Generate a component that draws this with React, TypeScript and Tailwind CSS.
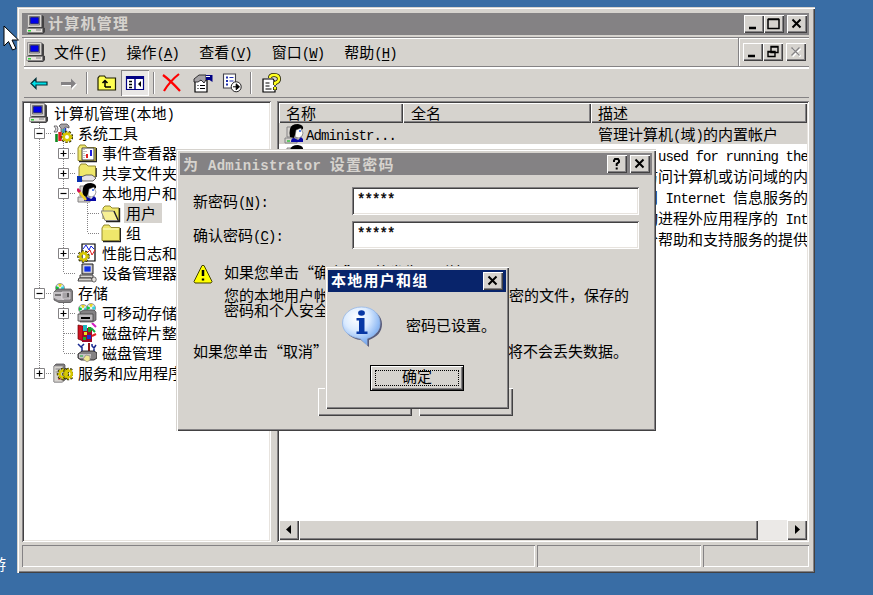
import type { ReactNode } from 'react';

const raised = 'bg-[#d6d3ce] shadow-[inset_1px_1px_0_#fff,inset_-1px_-1px_0_#424142,inset_-2px_-2px_0_#848284]';
const frame = 'bg-[#d6d3ce] shadow-[inset_1px_1px_0_#d6d3ce,inset_2px_2px_0_#fff,inset_-1px_-1px_0_#424142,inset_-2px_-2px_0_#848284]';
const sunken = 'shadow-[inset_1px_1px_0_#848284,inset_-1px_-1px_0_#fff,inset_2px_2px_0_#424142,inset_-2px_-2px_0_#e7e3de]';
const thinSunken = 'shadow-[inset_1px_1px_0_#848284,inset_-1px_-1px_0_#fff]';

// Latin runs take exactly half the advance of a Chinese glyph
const latin = "font-['Liberation_Mono',monospace] text-[14px] leading-none tracking-[-0.9px]";
const latinBold = "font-['Liberation_Mono',monospace] text-[14px] leading-none tracking-[0.3px]";

const Txt = ({ children, bold = false }: { children: string; bold?: boolean }) => (
    <span className={`whitespace-pre ${bold ? 'font-bold tracking-[1.25px]' : ''}`}>
        {(children.match(/[\x00-\x7f]+|[^\x00-\x7f]+/g) || []).map((run, i) =>
            run.charCodeAt(0) < 128 ? (
                <span key={i} className={bold ? latinBold : latin}>{run}</span>
            ) : (
                <span key={i}>{run}</span>
            )
        )}
    </span>
);

const Key = ({ label, k, tail = '' }: { label: string; k: string; tail?: string }) => (
    <span className="whitespace-pre">
        {label}
        <span className={latin}>
            (<span className="underline underline-offset-2">{k}</span>){tail}
        </span>
    </span>
);

const Svg = ({ children, size = 20 }: { children: ReactNode; size?: number }) => (
    <svg width={size} height={size} viewBox="0 0 20 20" className="shrink-0">{children}</svg>
);

const Computer = () => (
    <Svg>
        <path d="M3 1h13l2 1.5v11L16 15H3z" fill="#424142" />
        <path d="M1.5 .5h14v13h-14z" fill="#d6d3ce" stroke="#848284" strokeWidth=".8" />
        <path d="M3.5 2.5h10V11h-10z" fill="#b5b2b5" stroke="#636163" strokeWidth=".8" />
        <path d="M4.5 3.5h8v6h-8z" fill="#0000e8" stroke="#000060" strokeWidth=".6" />
        <path d="M1 15l2-2h13l3 1v4l-2 2H2z" fill="#424142" />
        <path d="M.5 14.5h16v4H.5z" fill="#e7e3de" stroke="#848284" strokeWidth=".7" />
        <path d="M2 16.8h3" stroke="#10d020" strokeWidth="1.3" />
        <path d="M10 16h5" stroke="#848284" />
    </Svg>
);

const FolderShape = () => (
    <>
        <path d="M2 18.5h17.5V5" fill="none" stroke="#212021" strokeWidth="1.4" />
        <path d="M1 5l2-3h5l2 2.5h8.5v13H1z" fill="#efe76b" stroke="#948a31" />
        <path d="M2 6h15.5" stroke="#ffffd0" />
    </>
);

const Folder = () => <Svg><FolderShape /></Svg>;

const OpenFolder = () => (
    <Svg>
        <path d="M2 16V5l2-2h5l2 2h7v12" fill="#efe76b" stroke="#948a31" />
        <path d="M18.5 5v13.5H5" fill="none" stroke="#212021" strokeWidth="1.4" />
        <path d="M0 8h12.5l4.5 9.5H4z" fill="#f7ef94" stroke="#848284" />
        <path d="M13 8l4.5 10" stroke="#212021" strokeWidth="1.2" />
    </Svg>
);

const Gear = ({ x, y }: { x: number; y: number }) => (
    <g transform={`translate(${x} ${y})`}>
        <circle r="4.7" fill="none" stroke="#212000" strokeWidth="3" strokeDasharray="2 1.3" />
        <circle r="3.2" fill="none" stroke="#d8c800" strokeWidth="2.4" />
        <circle r="4.6" fill="none" stroke="#d8c800" strokeWidth="1.6" strokeDasharray="1.6 1.7" />
    </g>
);

const Tools = () => (
    <Svg>
        <path d="M6 3l2-2h6l2 2v2l-3-1-2 1v4H8V5z" fill="#a5a2a5" stroke="#424142" strokeWidth=".7" />
        <path d="M1 3h3l1 3-1 3H1l2-3z" fill="#e7e3e7" stroke="#424142" strokeWidth=".7" />
        <path d="M3.5 11v8" stroke="#108a20" strokeWidth="2.6" />
        <path d="M7 9v9" stroke="#e02020" strokeWidth="3.4" />
        <path d="M10.5 6v7" stroke="#20a8b0" strokeWidth="2" />
        <path d="M12.5 5v5" stroke="#2038c0" strokeWidth="1.5" />
        <Gear x={14} y={14} />
    </Svg>
);

const EventLog = () => (
    <Svg>
        <FolderShape />
        <path d="M5 5h12v12H5z" fill="#fff" stroke="#424142" />
        <path d="M7 6v10M9 8v2M9 12v2" stroke="#848284" strokeDasharray="1 1" />
        <path d="M10 11v4" stroke="#e02020" strokeWidth="2" />
        <path d="M14 7v6" stroke="#2020e0" strokeWidth="2" />
    </Svg>
);

const Shared = () => (
    <Svg>
        <path d="M2 4l2-3h5l2 2h7.5v11H2z" fill="#efe76b" stroke="#948a31" />
        <path d="M19.3 5v9" stroke="#212021" />
        <path d="M4 14l5-2h6l4 3-3 3H5z" fill="#e7e3e7" stroke="#424142" strokeWidth=".8" />
        <path d="M0 13h5v6H0z" fill="#0830b0" />
    </Svg>
);

const User = ({ pencil = false }: { pencil?: boolean }) => (
    <Svg>
        <path d="M3 3h6v10H3zM1 14h12v5H1z" fill="#d6d3ce" stroke="#848284" />
        <path d="M6 5q1-5 8-5 6 1 5 5l-2 1-5 2-2 6-4-1q-1-4 0-8" fill="#000" />
        <path d="M12 6l5-2 1 3 1 2-1 3-3 2-4-1z" fill="#fff" stroke="#424142" strokeWidth=".5" />
        <path d="M7 18q0-4 3-4l4 2 3-3 2 2v3z" fill="#0808a5" />
        <path d="M15 7h2" stroke="#2058e0" strokeWidth="1.4" />
        {pencil && <path d="M1 7l8 10" stroke="#f0d020" strokeWidth="2.6" />}
        {pencil && <path d="M0 6l3 3" stroke="#d01060" strokeWidth="3" />}
        {!pencil && <path d="M3 17h3" stroke="#10c020" strokeWidth="1.2" />}
    </Svg>
);

const Perf = () => (
    <Svg>
        <path d="M5 1h13v17H5z" fill="#fff" stroke="#000" strokeWidth="1.2" />
        <path d="M6 6l3-4 3 5 2-4 3 3" fill="none" stroke="#1020e0" />
        <path d="M10 10l3-3 2 5 3-5" fill="none" stroke="#e02020" />
        <Gear x={6.5} y={13.5} />
    </Svg>
);

const Devices = () => (
    <Svg>
        <path d="M5 1h11v10H5z" fill="#bdbabd" stroke="#212021" />
        <path d="M7 3h7v6H7z" fill="#1030e0" stroke="#fff" strokeWidth=".6" />
        <path d="M3 12h13v3H3z" fill="#d6d3ce" stroke="#424142" />
        <path d="M2 15h12l2 3H1z" fill="#d6d3ce" stroke="#424142" />
        <ellipse cx="17" cy="16.5" rx="2.2" ry="2.6" fill="#e7e3de" stroke="#424142" strokeWidth=".8" />
    </Svg>
);

const Disc = ({ x, y }: { x: number; y: number }) => (
    <g transform={`translate(${x} ${y})`}>
        <circle r="4.5" fill="#d6e3e7" stroke="#848284" strokeWidth=".8" />
        <path d="M0 0L-4 -2V2z" fill="#10c840" />
        <path d="M0 0L-2 -4L2 -4z" fill="#e8d820" />
        <path d="M0 0L4 -2V2z" fill="#30d8e0" />
        <circle r="1" fill="#fff" />
    </g>
);

const Storage = () => (
    <Svg>
        <Disc x={7} y={5} />
        <path d="M1 9l3-3h14l1.5 2v10l-2 1.5H6L1 17z" fill="#848284" stroke="#424142" strokeWidth=".7" />
        <path d="M1 9h10v8H5l-4-2z" fill="#c6c3c6" />
        <path d="M9 9h8v7H9z" fill="#a5a2a5" stroke="#e7e3e7" strokeWidth=".7" />
        <path d="M2 12h6M15 10v4" stroke="#212021" strokeWidth="1.2" />
    </Svg>
);

const Removable = () => (
    <Svg>
        <Disc x={6} y={6} />
        <Disc x={14} y={5} />
        <path d="M3 9l4-2h10l2 2v8l-3 2H3z" fill="#848284" stroke="#424142" strokeWidth=".7" />
        <path d="M1 11h15v7H1z" fill="#bdbabd" stroke="#424142" strokeWidth=".8" />
        <path d="M4 14h9v2H4z" fill="#000" />
    </Svg>
);

const Defrag = () => (
    <Svg>
        <path d="M1 2l5 1v15l-5-2z" fill="#d01020" stroke="#600" strokeWidth=".7" />
        <path d="M6 5h9v14H5z" fill="#a00828" />
        <path d="M6 2h4v6H6z" fill="#20b8c0" />
        <path d="M11 4h3v5h-3z" fill="#18a020" />
        <path d="M7 9h3v3H7z" fill="#f0e020" />
        <path d="M10 12h4v4h-4z" fill="#2030d0" />
        <path d="M6 14h3v3H6z" fill="#18b030" />
        <path d="M15 0l4 4" stroke="#d020c0" strokeWidth="2" />
        <path d="M14 5l4 4" stroke="#10b040" strokeWidth="2" />
        <path d="M15 13l4-2" stroke="#e02020" strokeWidth="2" />
    </Svg>
);

const DiskMgmt = () => (
    <Svg>
        <path d="M1 1l3 3 3-3M5 4v5M15 1v2l2 2 2-3M17 4v5" fill="none" stroke="#182890" strokeWidth="1.5" />
        <path d="M12 0v8" stroke="#901818" strokeWidth="2" />
        <path d="M1 11l4-3h12l3 2v5l-3 2H4l-3-2z" fill="#848284" stroke="#212021" strokeWidth=".9" />
        <path d="M2 11h12v4H2z" fill="#c6c3c6" />
        <path d="M9 12l4 1v4l-3 2-4-3z" fill="#f0e890" stroke="#848284" strokeWidth=".7" />
        <path d="M3 13h3" stroke="#10b030" />
    </Svg>
);

const Services = () => (
    <Svg>
        <path d="M1 3l2-2h8l1 1v15l-3 2H1z" fill="#848284" stroke="#424142" strokeWidth=".7" />
        <path d="M1 3h9v16H1z" fill="#d6d3ce" stroke="#848284" strokeWidth=".6" />
        <path d="M2.5 6h6M2.5 9h6" stroke="#848284" />
        <path d="M5 16h3" stroke="#e02020" />
        <Gear x={10} y={11} />
        <Gear x={15.5} y={11} />
    </Svg>
);

// "-" / "+" / "p" (last one) draw an expander box, "t" a branch, "l" the last branch, "v" a plain line
const Guide = ({ kind }: { kind: string }) => (
    <svg width="24" height="20" viewBox="0 0 24 20" className="shrink-0">
        <path d={kind === 'l' || kind === 'p' ? 'M12.5 0V10' : 'M12.5 0V20'} stroke="#848284" strokeDasharray="1 1" />
        {kind !== 'v' && <path d="M13 10.5H25" stroke="#848284" strokeDasharray="1 1" />}
        {'-+p'.includes(kind) && (
            <>
                <path d="M7.5 5.5h10v10h-10z" fill="#fff" stroke="#848284" />
                <path d={kind === '-' ? 'M9.5 10.5h6' : 'M9.5 10.5h6M12.5 7.5v6'} stroke="#000" strokeWidth="1.2" />
            </>
        )}
    </svg>
);

const tree = [
    { guides: '', icon: <Computer />, label: '计算机管理(本地)' },
    { guides: '-', icon: <Tools />, label: '系统工具' },
    { guides: 'v+', icon: <EventLog />, label: '事件查看器' },
    { guides: 'v+', icon: <Shared />, label: '共享文件夹' },
    { guides: 'v-', icon: <User pencil />, label: '本地用户和组' },
    { guides: 'vvt', icon: <OpenFolder />, label: '用户', selected: true },
    { guides: 'vvl', icon: <Folder />, label: '组' },
    { guides: 'v+', icon: <Perf />, label: '性能日志和警报' },
    { guides: 'vl', icon: <Devices />, label: '设备管理器' },
    { guides: '-', icon: <Storage />, label: '存储' },
    { guides: 'v+', icon: <Removable />, label: '可移动存储' },
    { guides: 'vt', icon: <Defrag />, label: '磁盘碎片整理程序' },
    { guides: 'vl', icon: <DiskMgmt />, label: '磁盘管理' },
    { guides: 'p', icon: <Services />, label: '服务和应用程序' },
];

const users = [
    { name: 'Administr...', desc: '管理计算机(域)的内置帐户', selected: true },
    { name: 'ASPNET', desc: 'Account used for running the ASP.NET' },
    { name: 'Guest', desc: '供来宾访问计算机或访问域的内置帐户' },
    { name: 'IUSR', desc: '匿名访问 Internet 信息服务的内置帐户' },
    { name: 'IWAM', desc: '用于启动进程外应用程序的 Internet' },
    { name: 'SUPPORT', desc: '这是一个帮助和支持服务的提供商帐户' },
];

const menus = [
    ['文件', 'F'],
    ['操作', 'A'],
    ['查看', 'V'],
    ['窗口', 'W'],
    ['帮助', 'H'],
];

const glyphs = {
    min: <path d="M5 13h7" strokeWidth="2.5" />,
    max: <path d="M4 4.5h11v9H4zM4 4h11" strokeWidth="1.5" />,
    restore: <path d="M8 3.5h7v6H8zM8 4h7M5 8.5h7v5H5zM5 9h7" strokeWidth="1.4" fill="none" />,
    close: <path d="M5.5 4.5l8 8M13.5 4.5l-8 8" strokeWidth="2" />,
    help: <path d="M7 7V5.5L8 4h3l1 1.5V7L9.7 9v2M9.7 12.5v2" strokeWidth="2" />,
};

const CapButton = ({ glyph, disabled = false }: { glyph: keyof typeof glyphs; disabled?: boolean }) => (
    <button className={`h-[18px] w-5 shrink-0 ${raised}`}>
        <svg width="20" height="18" viewBox="0 0 20 18" fill="none" stroke={disabled ? '#848284' : '#000'}>
            {disabled && <path d="M6.5 5.5l8 8M14.5 5.5l-8 8" stroke="#fff" strokeWidth="2" />}
            {disabled ? <path d="M5.5 4.5l8 8M13.5 4.5l-8 8" strokeWidth="1.4" /> : glyphs[glyph]}
        </svg>
    </button>
);

const Sep = () => <div className="mx-1 h-[22px] w-0.5 border-l border-[#848284] bg-white" />;

const Tool = ({ children }: { children: ReactNode }) => (
    <div className="flex w-[29px] shrink-0 justify-center">{children}</div>
);

const Toolbar = () => (
    <div className="flex h-[29px] items-center border-b border-[#848284]">
        <Tool>
            <Svg><path d="M2 10.5l5-5V9h11v3H7v3.5z" fill="#00e0e8" stroke="#003038" strokeWidth="1.2" /></Svg>
        </Tool>
        <Tool>
            <Svg>
                <path d="M19 11.5l-5-5V10H4v3h10v4z" fill="#fff" />
                <path d="M18 10.5l-5-5V9H3v3h10v3.5z" fill="#848284" />
            </Svg>
        </Tool>
        <Sep />
        <Tool>
            <Svg>
                <path d="M1 17V5l1.5-2h5L9 5h9.5v12z" fill="#ffff52" stroke="#212000" strokeWidth="1.2" />
                <path d="M8 14h6M8 14V8.5M5.5 10L8 7.5l2.5 2.5" fill="none" stroke="#000" strokeWidth="1.5" />
            </Svg>
        </Tool>
        <div className="flex h-[26px] w-7 shrink-0 items-center justify-center bg-[#e9e7e5] shadow-[inset_1px_1px_0_#848284,inset_-1px_-1px_0_#fff]">
            <Svg>
                <path d="M1.5 3.5h17v13h-17z" fill="#fff" stroke="#000084" strokeWidth="1.2" />
                <path d="M1 3h18v3H1z" fill="#000084" />
                <path d="M10 5v12" stroke="#000084" strokeWidth="1.5" />
                <path d="M4 8.5h3M4 11.5h3M4 14.5h3" stroke="#000" strokeWidth="1.3" />
                <path d="M16 8v6l-3-3z" fill="#000" />
            </Svg>
        </div>
        <Sep />
        <div className="-ml-[3px]">
            <Tool>
                <Svg><path d="M2 2q8 6 17 16M18 1Q9 8 3 18" fill="none" stroke="#f00" strokeWidth="2.2" /></Svg>
            </Tool>
        </div>
        <div className="ml-[3px]">
            <Tool>
                <Svg>
                    <path d="M2 7h12v12H2z" fill="#fff" stroke="#000" strokeWidth="1.2" />
                    <path d="M4.5 12.5h1M7 12.5h5M4.5 15.5h1M7 15.5h5" stroke="#000" strokeWidth="1.2" />
                    <path d="M1 6l5-4h7v5l-2 3-3-3-3 2H1z" fill="#a5a2a5" stroke="#212021" strokeWidth=".9" />
                    <path d="M13 2h6.5v7l-3-2H13z" fill="#000084" />
                    <path d="M13 3.5h4" stroke="#fff" />
                </Svg>
            </Tool>
        </div>
        <Tool>
            <Svg>
                <path d="M1.5 1h12v14h-12z" fill="#fff" stroke="#42414a" strokeWidth="1.1" />
                <path d="M4 4.5h2M4 8h2M4 11.5h2" stroke="#2030b0" strokeWidth="1.8" />
                <path d="M7.5 4.5h4M7.5 8h4" stroke="#2030b0" />
                <circle cx="14.2" cy="13.8" r="5" fill="#fff" stroke="#212021" />
                <path d="M11 13.8h4M14.2 10.8l3.3 3-3.3 3z" fill="#000" stroke="#000" strokeWidth="1" />
            </Svg>
        </Tool>
        <Sep />
        <Tool>
            <Svg>
                <path d="M2 6h10l2 3v10H2z" fill="#fff" stroke="#000" strokeWidth="1.2" />
                <path d="M4.5 10h4M4.5 13h4M4.5 16h6" stroke="#000" />
                <path d="M9 5q0-3 4-3 5 0 5 4 0 3-4 4v2M14 14v3" fill="none" stroke="#212000" strokeWidth="4" />
                <path d="M9 5q0-3 4-3 5 0 5 4 0 3-4 4v2M14 14v2.5" fill="none" stroke="#ffff20" strokeWidth="2.4" />
            </Svg>
        </Tool>
    </div>
);

const ConsoleWindow = () => (
    <div className={`absolute left-[17px] top-[7px] flex h-[566px] w-[798px] flex-col px-[5px] pb-1.5 pt-1.5 ${frame}`}>
        <div className="flex h-[22px] w-[787px] shrink-0 items-center bg-[#848284] pl-1 pr-0.5 text-[#d6d3ce]">
            <Computer />
            <div className="ml-0.5 grow pb-0.5"><Txt bold>计算机管理</Txt></div>
            <CapButton glyph="min" />
            <CapButton glyph="max" />
            <div className="w-[3px]" />
            <CapButton glyph="close" />
        </div>

        <div className="mt-0.5 flex h-[62px] w-[787px] shrink-0 flex-col border-t border-[#848284] pl-0.5">
            <div className="flex h-[29px] shrink-0 items-stretch border-b border-[#848284] shadow-[inset_1px_1px_0_#fff]">
                <div className="flex grow items-center gap-5 border-r border-[#848284] pl-0.5">
                    <div className="-mr-3"><Computer /></div>
                    {menus.map(([label, k]) => <Key key={k} label={label} k={k} />)}
                </div>
                <div className="flex w-[70px] shrink-0 items-center border-l border-white pl-[3px]">
                    <CapButton glyph="min" />
                    <CapButton glyph="restore" />
                    <div className="w-[3px]" />
                    <CapButton glyph="close" disabled />
                </div>
            </div>
            <div className="border-t-2 border-white"><Toolbar /></div>
        </div>

        <div className="mt-0.5 flex h-[441px] w-[787px] shrink-0 gap-1.5">
            <div className={`w-[249px] shrink-0 overflow-hidden bg-white px-0.5 pt-[2px] ${sunken}`}>
                <div className="w-[245px] overflow-hidden pl-[3px]">
                    {tree.map((node) => (
                        <div key={node.label} className="flex h-5 items-center">
                            {node.guides.split('').map((kind, i) => <Guide key={i} kind={kind} />)}
                            <div className="flex w-6 shrink-0 justify-center">{node.icon}</div>
                            <div className={`ml-px flex h-5 shrink-0 items-center px-0.5 ${node.selected ? 'bg-[#d6d3ce] pr-1.5' : ''}`}>
                                <Txt>{node.label}</Txt>
                            </div>
                        </div>
                    ))}
                </div>
            </div>

            <div className={`flex min-w-0 grow flex-col bg-white p-0.5 ${sunken}`}>
                <div className="flex h-5 shrink-0">
                    <div className={`flex w-[124px] shrink-0 items-center pl-[7px] ${raised}`}><Txt>名称</Txt></div>
                    <div className={`flex w-[188px] shrink-0 items-center pl-2 ${raised}`}><Txt>全名</Txt></div>
                    <div className={`flex grow items-center pl-[7px] ${raised}`}><Txt>描述</Txt></div>
                </div>
                <div className="grow overflow-hidden">
                    {users.map((u) => (
                        <div key={u.name} className={`flex h-[21px] items-center ${u.selected ? 'bg-[#d6d3ce]' : ''}`}>
                            <div className="ml-[5px]"><User /></div>
                            <div className="ml-0.5 w-[292px] shrink-0"><Txt>{u.name}</Txt></div>
                            <Txt>{u.desc}</Txt>
                        </div>
                    ))}
                </div>
                <div className="flex h-5 shrink-0 bg-[#ebe9e7]">
                    <div className={`flex w-5 items-center justify-center ${raised}`}>
                        <svg width="8" height="10"><path d="M6 0v9L1 4.5z" /></svg>
                    </div>
                    <div className={`w-[459px] ${raised}`} />
                    <div className="grow" />
                    <div className={`flex w-5 items-center justify-center ${raised}`}>
                        <svg width="8" height="10"><path d="M2 0v9l5-4.5z" /></svg>
                    </div>
                </div>
            </div>
        </div>

        <div className="mt-[3px] flex h-[22px] w-[787px] shrink-0 gap-0.5">
            <div className={`w-[513px] ${thinSunken}`} />
            <div className={`w-[164px] ${thinSunken}`} />
            <div className={`w-[106px] ${thinSunken}`} />
        </div>
    </div>
);

const PasswordField = ({ label, k }: { label: string; k: string }) => (
    <div className="flex h-[28px] items-center">
        <div className="w-[159px] shrink-0"><Key label={label} k={k} tail=":" /></div>
        <div className={`h-7 w-[287px] bg-white pl-[5px] pt-px [-webkit-text-stroke:0.4px_black] ${sunken}`}><Txt>*****</Txt></div>
    </div>
);

const PasswordDialog = () => (
    <div className={`absolute left-[176px] top-[149px] h-[282px] w-[480px] p-1 ${frame}`}>
        <div className="flex h-[22px] items-center bg-[#848284] pl-[3px] pr-0.5 text-[#d6d3ce]">
            <div className="grow"><Txt bold>为 Administrator 设置密码</Txt></div>
            <CapButton glyph="help" />
            <div className="w-[3px]" />
            <CapButton glyph="close" />
        </div>
        <div className="flex flex-col gap-1.5 pl-[13px] pt-3">
            <PasswordField label="新密码" k="N" />
            <PasswordField label="确认密码" k="C" />
        </div>
        <div className="mt-3 flex pl-[13px]">
            <svg width="20" height="20" viewBox="0 0 20 20" className="mt-[3px] shrink-0">
                <path d="M9 1.5h2l8 16-1 1.5H2l-1-1.5z" fill="#ff0" stroke="#424100" />
                <path d="M10 6v6" stroke="#000" strokeWidth="2.5" />
                <path d="M8.8 14.5h2.4v2H8.8z" />
            </svg>
            <div className="ml-[11px] flex flex-col">
                <div className="mb-[7px] h-[15px] leading-[22px]"><Txt>如果您单击“确定”，将发生下列情况:</Txt></div>
                <div className="mt-1 h-[15px] leading-[15px]"><Txt>您的本地用户帐户将立即失去对它所有的加密的文件，保存的</Txt></div>
                <div className="h-[15px] leading-[15px]"><Txt>密码和个人安全证书的访问权。</Txt></div>
            </div>
        </div>
        <div className="mt-[26px] pl-[13px] leading-[15px]"><Txt>如果您单击“取消”，密码将不会被更改，并且将不会丢失数据。</Txt></div>
        <div className="mt-[30px] flex gap-[7px] pl-[138px]">
            <div className={`h-7 w-[94px] ${raised}`} />
            <div className={`h-7 w-[94px] ${raised}`} />
        </div>
    </div>
);

const MessageBox = () => (
    <div className={`absolute left-[325px] top-[266px] h-[143px] w-[184px] p-[3px] pt-1 ${frame}`}>
        <div className="flex h-[22px] w-[178px] items-center bg-[#08246b] pl-[3px] pr-[3px] text-white">
            <div className="grow pb-0.5"><Txt bold>本地用户和组</Txt></div>
            <CapButton glyph="close" />
        </div>
        <div className="flex items-center pl-[13px] pt-[14px]">
            <svg width="42" height="42" viewBox="0 0 42 42" className="shrink-0">
                <defs>
                    <radialGradient id="bubble" cx="38%" cy="28%" r="75%">
                        <stop offset="0" stopColor="#fff" />
                        <stop offset=".45" stopColor="#dbebff" />
                        <stop offset="1" stopColor="#6ba2ef" />
                    </radialGradient>
                </defs>
                <path d="M22 3C34 3 41 10 41 18c0 8-5 13-13 16v7l-8-7C10 33 3 27 3 18 3 9 12 3 22 3" fill="#42456b" opacity=".85" />
                <path d="M20.5 1C32 1 39 8 39 17c0 8-5 13-13 15.5V39l-7-6.5C9 31 1.500 26 1.500 17 1.500 8 10 1 20.500 1" fill="url(#bubble)" stroke="#94b6e7" strokeWidth=".8" />
                <ellipse cx="20.5" cy="7" rx="3.4" ry="2.8" fill="#0838a5" />
                <path d="M15.5 12h8v13.5h3V28h-11v-2.5H18v-11h-2.5z" fill="#0838a5" />
            </svg>
            <div className="-mt-1 ml-[23px]"><Txt>密码已设置。</Txt></div>
        </div>
        <button className={`ml-[42px] mt-[17px] block h-[26px] w-[94px] border border-black p-1 ${raised}`}>
            <div className="flex h-4 items-center justify-center border border-dotted border-black pb-1"><Txt>确定</Txt></div>
        </button>
    </div>
);

export default function App() {
    return (
        <div
            lang="zh-CN"
            className="relative h-[595px] w-[873px] overflow-hidden bg-[#396da5] font-['Noto_Sans_CJK_SC',sans-serif] text-[15px] leading-5 text-black [text-spacing-trim:space-all]"
        >
            <ConsoleWindow />
            <PasswordDialog />
            <MessageBox />
            <div className="absolute -left-[9px] top-[554px] text-white">游</div>
            <svg className="absolute left-[3px] top-[25px]" width="17" height="27" viewBox="0 0 17 27">
                <path d="M1 1v20l4.5-4.5 4 8.5 3.5-1.5-4-8.5h6.5z" fill="#fff" stroke="#000" />
            </svg>
        </div>
    );
}
